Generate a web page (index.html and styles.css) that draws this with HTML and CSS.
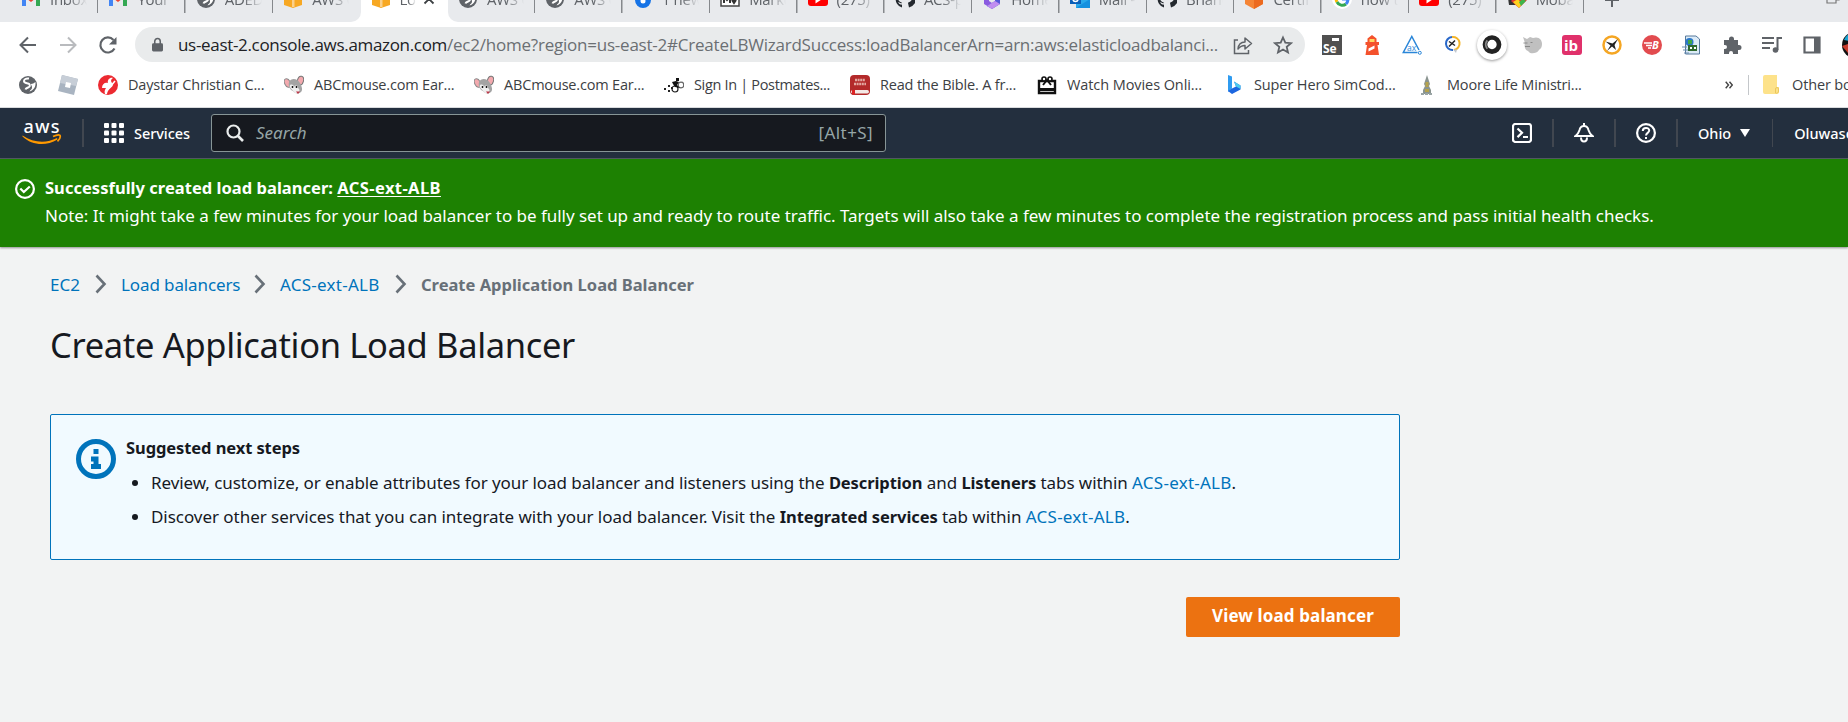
FILE: index.html
```html
<!DOCTYPE html>
<html lang="en">
<head>
<meta charset="utf-8">
<title>Create Application Load Balancer</title>
<link rel="stylesheet" href="styles.css">
</head>
<body>
<svg width="0" height="0" class="defs">
  <defs>
    <symbol id="gmail" viewBox="0 0 20 20"><path d="M1 3v14h4V8z" fill="#4285f4"/><path d="M19 3v14h-4V8z" fill="#34a853"/><path d="M1 3h3l6 5 6-5h3v3l-9 7-9-7z" fill="#ea4335"/></symbol>
    <symbol id="globe" viewBox="0 0 20 20"><circle cx="10" cy="10" r="9" fill="#5f6368"/><path d="M11 3.500c-3-.5-5 1-5 2.500 0 2 2 2 4 2.500s2.500 2.500 1 3.500-3 1-3.500 2.500" fill="none" stroke="#fff" stroke-width="2"/><path d="M13 9c1.500 0 3-1 4.500-2 .5 5-2 8.500-6 9.500 1-2 2.500-2 2.500-4s-1-2-1-3.500z" fill="#fff"/></symbol>
    <symbol id="cube" viewBox="0 0 20 20"><path d="M1 3l9-3 9 3v13l-9 3-9-3z" fill="#f7a823"/><path d="M9 2h2.500v16H9z" fill="#fbd08a"/></symbol>
    <symbol id="drop" viewBox="0 0 20 20"><path d="M10 0C5 4 2 8 2 11a8 8 0 0 0 16 0C18 8 15 4 10 0z" fill="#1573e6"/><circle cx="10" cy="12" r="2.500" fill="#fff"/></symbol>
    <symbol id="md" viewBox="0 0 20 20"><path d="M1 4h18v13H1z" fill="#fff" stroke="#444" stroke-width="1.500"/><path d="M4 14V8l3 3 3-3v6M14 8v5m-2-2l2 3 2-3" fill="none" stroke="#333" stroke-width="2"/></symbol>
    <symbol id="yt" viewBox="0 0 20 20"><rect y="3" width="20" height="14" rx="3" fill="#f00"/><path d="M7.500 6.500v8l6-4z" fill="#fff"/></symbol>
    <symbol id="git" viewBox="0 0 20 20"><path d="M10 1a9 9 0 0 0-3 17.600v-3C4 16 4 14 3 13c2 0 2 2 4 1 0-1-4-1-4-5l1-3V4l3 1h6l3-1v2l1 3c0 4-4 4-4 5l1 4.600A9 9 0 0 0 10 1z" fill="#24292f"/></symbol>
    <symbol id="hex" viewBox="0 0 20 20"><path d="M1 4l9-4 9 4v11l-9 5-9-5z" fill="#f58536"/><path d="M10 9l9-5v11l-9 5z" fill="#ec6a1f"/></symbol>
    <symbol id="m365" viewBox="0 0 20 20"><path d="M10 0L2 5v10l5 3 3-4-3-2V8l3-2z" fill="#8a5be0"/><path d="M10 0l8 5v10l-8 5-5-3 8-5V6z" fill="#5659d8"/><path d="M5 17l8-5 5 3-8 5z" fill="#c08df0"/></symbol>
    <symbol id="outlook" viewBox="0 0 20 20"><path d="M6 1h14v18H6z" fill="#28a8ea"/><path d="M6 19l14-9v9z" fill="#1490df"/><path d="M0 5h11v10H0z" fill="#0a5fb8"/><circle cx="5.500" cy="10" r="2.500" fill="none" stroke="#fff" stroke-width="1.600"/></symbol>
    <symbol id="google" viewBox="0 0 20 20"><circle cx="10" cy="10" r="10" fill="#fff"/><path d="M15 6a6 6 0 0 0-10 1" fill="none" stroke="#ea4335" stroke-width="3"/><path d="M5 7a6 6 0 0 0 0 6" fill="none" stroke="#fbbc05" stroke-width="3"/><path d="M5 13a6 6 0 0 0 9 2" fill="none" stroke="#34a853" stroke-width="3"/><path d="M10 10h6c0 2-1 4-2 5" fill="none" stroke="#4285f4" stroke-width="3"/></symbol>
    <symbol id="moba" viewBox="0 0 20 20"><path d="M0 2h10v14H2z" fill="#333"/><path d="M4 12l9-9 7 8-8 8z" fill="#e33b2e"/><path d="M6 13l5-3 4 5-3 4z" fill="#ffd21f"/><path d="M12 13l4-3 3 2-5 5z" fill="#3db54a"/></symbol>
    <symbol id="mouse" viewBox="0 0 20 20"><ellipse cx="3.500" cy="8" rx="2.800" ry="4.500" fill="#f3a9ae" stroke="#8a8a8a" transform="rotate(-25 3.500 8)"/><ellipse cx="16.500" cy="5.500" rx="3" ry="4.300" fill="#f3a9ae" stroke="#777" transform="rotate(15 16.500 5.500)"/><path d="M5 7c2-4 8-4 11 1 2 4 3 7 1 9s-6 2-8-1c-3-1-5-5-4-9z" fill="#a3a3a3"/><path d="M6 10c2-1 4 0 4 2 1-2 4-2 4 1 2 1 2 4 0 5s-4 0-5-2-4-3-3-6z" fill="#eee"/><circle cx="8.500" cy="12" r=".9"/><circle cx="12.500" cy="12" r=".9"/><path d="M12 16.500h4l-2 2.500z" fill="#b34"/></symbol>
    <symbol id="chevron" viewBox="0 0 12 20"><path d="M1.500 1.500L9.500 10l-8 8.500" fill="none" stroke="#687078" stroke-width="2.600"/></symbol>
  </defs>
</svg>

<div class="tabstrip">
  <div class="tab"><svg><use href="#gmail"/></svg><span>Inbox (1)</span></div>
  <div class="tab"><svg><use href="#gmail"/></svg><span>Your Tr</span></div>
  <div class="tab"><svg><use href="#globe"/></svg><span>ADEDA</span></div>
  <div class="tab nosep"><svg><use href="#cube"/></svg><span>AWS C</span></div>
  <div class="tab active"><svg><use href="#cube"/></svg><span>Lo</span><svg class="close" viewBox="0 0 12 12"><path d="M1.500 1.500l9 9m0-9l-9 9" stroke="#3c4043" stroke-width="1.800"/></svg></div>
  <div class="tab after"><svg><use href="#globe"/></svg><span>AWS C</span></div>
  <div class="tab"><svg><use href="#globe"/></svg><span>AWS C</span></div>
  <div class="tab"><svg><use href="#drop"/></svg><span>1 new n</span></div>
  <div class="tab"><svg><use href="#md"/></svg><span>Markd</span></div>
  <div class="tab"><svg><use href="#yt"/></svg><span>(275) </span></div>
  <div class="tab"><svg><use href="#git"/></svg><span>ACS-pr</span></div>
  <div class="tab"><svg><use href="#m365"/></svg><span>Home</span></div>
  <div class="tab"><svg><use href="#outlook"/></svg><span>Mail - </span></div>
  <div class="tab"><svg><use href="#git"/></svg><span>Briand</span></div>
  <div class="tab"><svg><use href="#hex"/></svg><span>Certifi</span></div>
  <div class="tab"><svg><use href="#google"/></svg><span>how to</span></div>
  <div class="tab"><svg><use href="#yt"/></svg><span>(275) </span></div>
  <div class="tab"><svg><use href="#moba"/></svg><span>Mobax</span></div>
  <svg class="newtab" viewBox="0 0 16 16"><path d="M8 1v14M1 8h14" stroke="#5f6368" stroke-width="2"/></svg>
  <svg class="restore" viewBox="0 0 14 14"><path d="M1 4h9v9H1zM4 4V1h9v9h-3" fill="none" stroke="#777" stroke-width="1.200"/></svg>
</div>

<div class="toolbar">
  <div class="nav">
    <svg viewBox="0 0 20 20"><path d="M18 10H3m7-7.500L2.500 10l7.500 7.500" fill="none" stroke="#5f6368" stroke-width="2"/></svg>
    <svg viewBox="0 0 20 20"><path d="M2 10h15m-7-7.500l7.500 7.500-7.500 7.500" fill="none" stroke="#b9bbbe" stroke-width="2"/></svg>
    <svg viewBox="0 0 20 20"><path d="M16.500 13.500A7.500 7.500 0 1 1 15.500 5" fill="none" stroke="#5f6368" stroke-width="2.200"/><path d="M18.500 2v7.500H11z" fill="#5f6368"/></svg>
  </div>
  <div class="omnibox">
    <svg class="lock" viewBox="0 0 12 16"><rect y="6" width="12" height="9" rx="1.500" fill="#5f6368"/><path d="M3 7V4a3 3 0 0 1 6 0v3" fill="none" stroke="#5f6368" stroke-width="1.700"/></svg>
    <span class="host">us-east-2.console.aws.amazon.com</span><span class="path">/ec2/home?region=us-east-2#CreateLBWizardSuccess:loadBalancerArn=arn:aws:elasticloadbalanci...</span>
    <svg class="share" viewBox="0 0 20 20"><path d="M5 5H1.500v13.500h14V15" fill="none" stroke="#5f6368" stroke-width="1.500"/><path d="M5 14c.5-5 3-7 7-7V3l6.500 5.500L12 14v-3.500c-3 0-5 1-7 3.500z" fill="none" stroke="#5f6368" stroke-width="1.500" stroke-linejoin="round"/></svg>
    <svg class="star" viewBox="0 0 20 20"><path d="M10 2.500l2.300 5.200 5.700.5-4.300 3.700 1.300 5.600-5-3-5 3 1.300-5.600L2 8.200l5.700-.5z" fill="none" stroke="#5f6368" stroke-width="1.800"/></svg>
  </div>
  <div class="extensions">
    <svg viewBox="0 0 20 20"><path d="M0 0h20v20H0z" fill="#505050"/><path d="M10 3h7v3h-7z" fill="#fff"/><text x="1" y="17.500" class="ic-se">Se</text></svg>
    <svg viewBox="0 0 20 20"><path d="M10 0l4.500 3.500V7H17v3h-1.500L17 20H3.500l1.500-10H3.500V7h2V3.500z" fill="#f4512c"/><path d="M7.500 4h5v3h-5z" fill="#ffd75e"/><path d="M6.500 13.500l6-3v3l-6 3z" fill="#fff"/></svg>
    <svg viewBox="0 0 20 20"><path d="M15.500 17.500H1.300L9.800 1.500 17 15" fill="none" stroke="#2a86d8" stroke-width="1.500"/><circle cx="17.800" cy="17.800" r="1.500" fill="#fff" stroke="#2a86d8"/><text x="5" y="15.500" class="ic-ax">ax</text></svg>
    <svg viewBox="0 0 20 20"><path d="M10 2a6.500 6.500 0 1 0 1 13" fill="none" stroke="#2867c9" stroke-width="2"/><path d="M10 2a6.500 6.500 0 0 1 2 13" fill="none" stroke="#f4b52a" stroke-width="2"/><path d="M7 6.500l6 4M7 11.500l6-6" stroke="#222" stroke-width="1.500"/><path d="M11 14.500h4l-1 3.500z" fill="#bfc6cf"/></svg>
    <svg class="ring" viewBox="0 0 30 32"><circle cx="15" cy="15.500" r="7.500" fill="none" stroke="#222" stroke-width="5"/><path d="M10 11a7 7 0 0 0 0 9" fill="none" stroke="#888" stroke-width="2"/></svg>
    <svg viewBox="0 0 20 20"><path d="M1 2l4 2 3-2 3 1c6-2 9 2 9 6s-2 5-3 6c-2 4-9 4-10 2l-1-1c-3-1-4-5-3-8z" fill="#c0c0c0"/><path d="M1.500 8h4M3 11.500h5M8.500 7.500h2" stroke="#888"/></svg>
    <svg viewBox="0 0 20 20"><rect width="20" height="20" rx="3" fill="#e0316b"/><text x="2" y="16" class="ic-ib">ib</text></svg>
    <svg viewBox="0 0 20 20"><circle cx="10" cy="10" r="8.500" fill="#fff" stroke="#f5a623" stroke-width="2.500"/><path d="M3.500 6.500l7 2L16 4l-3.500 6 1.500 5-4-3.500L5 16l3.500-5.500z" fill="#222"/></svg>
    <svg viewBox="0 0 20 20"><circle cx="10" cy="10" r="10" fill="#e24b4f"/><path d="M2 8h8M4 10.500h6M6 13h3" stroke="#fff" stroke-width="1.500"/><text x="10" y="14" class="ic-b">B</text></svg>
    <svg viewBox="0 0 20 20"><path d="M3.500 1H14l3.500 3v15h-14z" fill="#dcebf7" stroke="#56799b"/><circle cx="7.500" cy="7" r="4" fill="#2b77c9"/><path d="M6 5h4v4H6z" fill="#3fa648"/><path d="M6 10h9v6H6z" fill="#2f6a2f"/><path d="M8 12h2v2H8zm4 0h2v2h-2z" fill="#fff"/><path d="M0 12h5M1 15h5M2 18h5" stroke="#6a8db0"/></svg>
    <svg viewBox="0 0 20 20"><path d="M2 5h5V4a2.500 2.500 0 0 1 5 0v1h4v5h1a2.500 2.500 0 0 1 0 5h-1v4h-5v-1a2 2 0 0 0-4 0v1H2v-5h1a2 2 0 0 0 0-4H2z" fill="#5f6368"/></svg>
    <svg viewBox="0 0 20 20"><path d="M0 3h12M0 8h12M0 13h8M15.500 15V3H20" fill="none" stroke="#5f6368" stroke-width="2"/><circle cx="13.500" cy="15" r="2.800" fill="#5f6368"/></svg>
    <svg viewBox="0 0 20 20"><path d="M2.500 2.500h15v15h-15z" fill="#fff" stroke="#5f6368" stroke-width="2.200"/><path d="M12 2h6v16h-6z" fill="#5f6368"/></svg>
    <svg class="avatar" viewBox="0 0 26 26"><circle cx="13" cy="13" r="13" fill="#111"/><path d="M2 8A13 13 0 0 1 13 0v10z" fill="#19a6d6"/><path d="M0 14l6-2 4 3-4 6z" fill="#c93b2c"/></svg>
  </div>
</div>

<div class="bookmarks">
  <div class="bm"><svg><use href="#globe"/></svg></div>
  <div class="bm"><svg viewBox="0 0 20 20"><path d="M4 0l16 4-4 16L0 16z" fill="#a9b4c1"/><path d="M4 0l16 4-2 7L2 8z" fill="#c7ced7"/><path d="M8 7l5 1-1 5-5-1z" fill="#fff"/></svg></div>
  <div class="bm"><svg viewBox="0 0 20 20"><circle cx="10" cy="10" r="10" fill="#ec2a31"/><path d="M4 13c0-4 3-6 6-5-1-3 2-6 5-5-3 2-2 4 0 6 0 4-5 4-6 10H7c-1-3 0-4 1-6-2 0-2 0-4 0z" fill="#fff"/><path d="M12 12l5-6" stroke="#fff" stroke-width="1.500"/></svg><span class="w136">Daystar Christian C...</span></div>
  <div class="bm"><svg><use href="#mouse"/></svg><span class="w140">ABCmouse.com Ear...</span></div>
  <div class="bm"><svg><use href="#mouse"/></svg><span class="w140">ABCmouse.com Ear...</span></div>
  <div class="bm"><svg viewBox="0 0 20 20"><circle cx="11" cy="14" r="3" fill="none" stroke="#222" stroke-width="1.200"/><circle cx="17" cy="10" r="2.800" fill="none" stroke="#666" stroke-width="1.200"/><path d="M8 7l4-1 3 1-2 3 3 3-5-1-2-3zM12 3h3v3h-3z" fill="#111"/><path d="M0 14h2M4 16h2M4 11h2M7 13h2" stroke="#222" stroke-width="2"/></svg><span class="w136 tight">Sign In | Postmates...</span></div>
  <div class="bm"><svg viewBox="0 0 20 20"><rect width="20" height="20" rx="4" fill="#b32a2a"/><rect x="1" y="15" width="18" height="3.500" rx="1.700" fill="#f4e9e6"/><path d="M5 5h10M4 9h12" stroke="#e3a7a0" stroke-width="2.500" stroke-dasharray="2 .6"/><path d="M5 15v5l-1.500-1L2 20v-5z" fill="#d22"/></svg><span class="w137">Read the Bible. A fr...</span></div>
  <div class="bm"><svg viewBox="0 0 20 20"><path d="M2 6h16v12H2z" fill="none" stroke="#111" stroke-width="2.400"/><path d="M2 13h16v3H2z" fill="#111"/><path d="M6 10l4-5 4 5" fill="none" stroke="#111" stroke-width="2"/><circle cx="7" cy="4" r="2" fill="#fff" stroke="#111" stroke-width="1.600"/><circle cx="13" cy="4" r="2" fill="#fff" stroke="#111" stroke-width="1.600"/></svg><span class="w137 loose">Watch Movies Onli...</span></div>
  <div class="bm"><svg viewBox="0 0 20 20"><path d="M4 0l4 1.500v12L4 17z" fill="#2f9bf0"/><path d="M4 16l4-2.500 4-2-2-5 6.500 4v4L8 19z" fill="#1c66e0"/><path d="M10 6.500l6.500 4v3.500l-4.500-2.500z" fill="#4cc9ee"/></svg><span class="w143">Super Hero SimCod...</span></div>
  <div class="bm"><svg viewBox="0 0 20 20"><path d="M10 0l2 6 1 3-1 2 2 4v4H6v-4l2-4-1-2 1-3z" fill="#8a9490"/><path d="M8.500 7h3v5h-3zM8 14h4v3H8z" fill="#b5a24c"/><path d="M4 19h12" stroke="#9aa5a5" stroke-width="2" stroke-dasharray="3 1"/></svg><span class="w137">Moore Life Ministri...</span></div>
  <div class="overflow">
    <svg viewBox="0 0 8 8"><path d="M.7.700L3.500 4 .7 7.300M4.500.700L7.300 4 4.500 7.300" fill="none" stroke="#444" stroke-width="1.400"/></svg>
    <i></i>
    <svg class="folder" viewBox="0 0 16 19"><path d="M0 2a2 2 0 0 1 2-2h12v12h2v5a2 2 0 0 1-2 2H2a2 2 0 0 1-2-2z" fill="#fde28a"/><path d="M12.500 18v-4a1.500 1.500 0 0 1 3 0v2a2 2 0 0 1-3 2z" fill="#fde28a" stroke="#eac75c"/></svg>
    <span>Other bookmarks</span>
  </div>
</div>

<header class="awsnav">
  <svg class="logo" viewBox="0 0 40 27"><text x="1.500" y="13.500" textLength="36" class="ic-aws">aws</text><path d="M.5 16.500c11 7.500 24 8 34.500 2.500l.5 1.500C24 27.500 10 26.500.5 17.500z" fill="#f90"/><path d="M31 17.500c3-1.500 6-2 7-1.200.6 1.500-.5 4.200-2.500 6" fill="none" stroke="#f90" stroke-width="1.700"/></svg>
  <i class="vsep s1"></i>
  <svg class="grid" viewBox="0 0 20 20"><g fill="#fff"><rect width="5" height="5" rx="1"/><rect x="7.500" width="5" height="5" rx="1"/><rect x="15" width="5" height="5" rx="1"/><rect y="7.500" width="5" height="5" rx="1"/><rect x="7.500" y="7.500" width="5" height="5" rx="1"/><rect x="15" y="7.500" width="5" height="5" rx="1"/><rect y="15" width="5" height="5" rx="1"/><rect x="7.500" y="15" width="5" height="5" rx="1"/><rect x="15" y="15" width="5" height="5" rx="1"/></g></svg>
  <span class="services">Services</span>
  <div class="search">
    <svg viewBox="0 0 18 18"><circle cx="7.500" cy="7.500" r="6" fill="none" stroke="#eaeded" stroke-width="2.200"/><path d="M12 12l5 5" stroke="#eaeded" stroke-width="2.600"/></svg>
    <em>Search</em><span>[Alt+S]</span>
  </div>
  <div class="navright">
    <svg viewBox="0 0 20 20"><rect x="1" y="1" width="18" height="18" rx="2.500" fill="none" stroke="#fff" stroke-width="2.200"/><path d="M5.500 5.500L10 9.800l-4.500 4.300M11 14h5" fill="none" stroke="#fff" stroke-width="2.200"/></svg>
    <i class="vsep"></i>
    <svg viewBox="0 0 20 20"><path d="M10 0v3M1.500 13h17c-3-2-3.300-4-4-6-.7-3-2.500-4-4.500-4S6.200 4 5.500 7c-.7 2-1 4-4 6zM7 14.500c0 2.500 1 4 3 4s3-1.500 3-4" fill="none" stroke="#fff" stroke-width="2"/></svg>
    <i class="vsep"></i>
    <svg viewBox="0 0 20 20"><circle cx="10" cy="10" r="8.900" fill="none" stroke="#fff" stroke-width="2.200"/><path d="M6.800 8c0-4 6.400-4 6.400-.5 0 2.300-3.200 2.500-3.200 5" fill="none" stroke="#fff" stroke-width="2"/><path d="M9 14h2v2H9z" fill="#fff"/></svg>
    <i class="vsep"></i>
    <span>Ohio</span>
    <svg class="caret" viewBox="0 0 10 8"><path d="M0 0h10L5 8z" fill="#fff"/></svg>
    <i class="vsep thin"></i>
    <span class="user">Oluwaseun</span>
  </div>
</header>

<div class="flash">
  <svg viewBox="0 0 20 20"><circle cx="10" cy="10" r="8.900" fill="none" stroke="#fff" stroke-width="2.200"/><path d="M5.300 9.500l3.500 3.500 6-5.500" fill="none" stroke="#fff" stroke-width="2.200"/></svg>
  <div>
    <p class="flash-title">Successfully created load balancer: <u>ACS-ext-ALB</u></p>
    <p class="flash-note">Note: It might take a few minutes for your load balancer to be fully set up and ready to route traffic. Targets will also take a few minutes to complete the registration process and pass initial health checks.</p>
  </div>
</div>

<main>
  <nav class="crumbs">
    <a class="c1">EC2</a><svg><use href="#chevron"/></svg><a class="c2">Load balancers</a><svg><use href="#chevron"/></svg><a class="c3">ACS-ext-ALB</a><svg><use href="#chevron"/></svg><b>Create Application Load Balancer</b>
  </nav>
  <h1>Create Application Load Balancer</h1>
  <section class="info">
    <svg viewBox="0 0 40 40"><circle cx="20" cy="20" r="17.500" fill="none" stroke="#0073bb" stroke-width="5"/><path d="M17.500 10h5v5h-5zM15 17.500h7.500V25H25v5H15v-5h2.500v-2.500H15z" fill="#0073bb"/></svg>
    <div>
      <h2>Suggested next steps</h2>
      <ul>
        <li>Review, customize, or enable attributes for your load balancer and listeners using the <b>Description</b> and <b>Listeners</b> tabs within <a>ACS-ext-ALB</a>.</li>
        <li class="second">Discover other services that you can integrate with your load balancer. Visit the <b>Integrated services</b> tab within <a>ACS-ext-ALB</a>.</li>
      </ul>
    </div>
  </section>
  <div class="actions"><button>View load balancer</button></div>
</main>
</body>
</html>
```
FILE: styles.css
```css
* { box-sizing: border-box; }
html, body { margin: 0; height: 722px; overflow: hidden; }
body { background: #f2f3f3; font-family: "Noto Sans", "Open Sans", sans-serif; font-size: 17px; color: #16191f; }
svg { display: block; flex: none; width: 20px; height: 20px; }
span, em, b, a, i { white-space: nowrap; }
p, h1, h2, ul { margin: 0; padding: 0; font-weight: 400; white-space: nowrap; }
.defs { position: absolute; width: 0; height: 0; }

/* browser tab strip */
.tabstrip { display: flex; align-items: flex-end; height: 22px; padding-left: 11px; overflow: hidden; background: #e8eaed; font: 15px "Open Sans", sans-serif; color: #5f6368; }
.tab { display: flex; flex: none; align-items: center; width: 87.400px; height: 46px; padding-left: 10px; background: linear-gradient(#85888c, #85888c) right 14px / 1.500px 23px no-repeat; }
.tab span { width: 37px; margin-left: 9px; overflow: hidden; letter-spacing: -.3px; -webkit-mask-image: linear-gradient(90deg, #000 50%, transparent); mask-image: linear-gradient(90deg, #000 50%, transparent); }
.tab.nosep { background: #e8eaed; border-radius: 0 0 10px 0; box-shadow: 12px 0 0 #fff; }
.tab.active { background: #fff; }
.tab.active span { width: 16px; }
.tab.after { border-radius: 0 0 0 10px; background-color: #e8eaed; box-shadow: -12px 0 0 #fff; }
.tab .close { width: 12px; height: 12px; margin-left: 7px; }
.newtab { width: 16px; height: 16px; margin: 0 0 14px 20px; }
.restore { width: 14px; height: 14px; margin: 0 8px 18px auto; }

/* address bar */
.toolbar { display: flex; align-items: center; height: 45px; background: #fff; }
.nav { display: flex; gap: 20px; width: 135px; padding-left: 18px; }
.omnibox { display: flex; align-items: center; width: 1170px; height: 35px; padding-left: 17px; border-radius: 18px; background: #e9ebec; font: 17px "Open Sans", sans-serif; color: #6b6f73; }
.lock { width: 11px; height: 16px; margin-right: 15px; }
.host { flex: none; width: 269px; letter-spacing: -.32px; color: #202124; }
.path { flex: none; width: 771px; letter-spacing: -.223px; }
.share { margin-left: 15px; }
.star { margin-left: 20px; }
.extensions { display: flex; flex: 1; align-items: center; gap: 20px; height: 45px; padding-left: 17px; overflow: hidden; }
.extensions .ring { width: 30px; height: 30px; margin: 0 -5px; border-radius: 50%; box-shadow: 0 1px 3px #999; }
.extensions .avatar { width: 26px; height: 26px; }
.ic-se { font: 700 12px "Open Sans", sans-serif; fill: #fff; }
.ic-ax { font: 8.500px "Open Sans", sans-serif; fill: #2a86d8; }
.ic-ib { font: 700 15px "Open Sans", sans-serif; fill: #fff; }
.ic-b { font: italic 700 11px "Open Sans", sans-serif; fill: #fff; }
.ic-aws { font: 500 18px "Noto Sans", sans-serif; fill: #fff; }

/* bookmarks bar */
.bookmarks { display: flex; align-items: center; gap: 20px; height: 41px; padding: 0 0 5px 18px; background: #fff; border-bottom: 1px solid #d9dbdd; font: 14.500px "Open Sans", sans-serif; color: #3c4043; overflow: hidden; }
.bm { display: flex; flex: none; align-items: center; gap: 10px; letter-spacing: -.18px; }
.w136 { width: 136px; }
.w137 { width: 137px; }
.w140 { width: 140px; }
.w143 { width: 143px; letter-spacing: -.12px; }
.tight { letter-spacing: -.33px; }
.loose { letter-spacing: -.08px; }
.overflow { display: flex; align-items: center; width: 123px; margin-left: auto; letter-spacing: -.15px; }
.overflow svg { width: 8px; height: 8px; }
.overflow i { flex: none; width: 1px; height: 20px; margin: 0 14px 0 15px; background: #c4c7ca; }
.overflow .folder { width: 16px; height: 19px; margin-right: 13px; }

/* console navigation */
.awsnav { display: flex; align-items: center; height: 51px; padding: 0 0 1px 22px; background: #232f3e; border-bottom: 1px solid #545b64; color: #fff; font-size: 14.500px; font-weight: 500; overflow: hidden; }
.logo { width: 40px; height: 27px; }
.vsep { width: 2px; height: 28px; background: #414750; }
.s1 { margin: 0 20px; }
.services { width: 56px; margin: 1px 21px 0 10px; letter-spacing: -.06px; }
.search { display: flex; align-items: center; width: 675px; height: 38px; padding: 0 12px 0 14px; border: 1px solid #879596; border-radius: 3px; background: #16191f; color: #95a5a6; font-size: 17px; font-weight: 400; }
.search svg { width: 18px; height: 18px; margin-right: 12px; }
.search span { margin-left: auto; letter-spacing: .4px; }
.navright { display: flex; align-items: center; width: 336px; margin-left: auto; }
.navright .vsep { flex: none; margin: 0 20px; }
.navright span { margin-top: 1px; }
.navright .caret { width: 10px; height: 8px; margin-left: 9px; }
.navright .vsep.thin { width: 1px; margin: 0 21px 0 22px; }

/* success message */
.flash { display: flex; gap: 10px; height: 88px; padding: 15px 0 0 15px; background: #1d8102; color: #fff; box-shadow: 0 1px 2px #0006; line-height: 28px; }
.flash svg { margin-top: 5px; }
.flash-title { font-size: 16.500px; font-weight: 700; letter-spacing: .03px; }
.flash-title u { letter-spacing: .4px; text-underline-offset: 2px; }
.flash-note { letter-spacing: -.028px; }

/* page content */
main { width: 1400px; padding-left: 50px; }
.crumbs { display: flex; align-items: center; height: 28px; margin-top: 23px; color: #687078; }
.crumbs svg { width: 12px; height: 20px; margin: 0 14px; }
.crumbs b { font-size: 16.500px; }
a { color: #0073bb; letter-spacing: .25px; }
.c1 { width: 31px; letter-spacing: 0; }
.c2 { width: 119px; letter-spacing: -.11px; }
.c3 { width: 101px; }
h1 { margin-top: 22px; font-size: 34.500px; line-height: 50px; letter-spacing: -.34px; }
.info { display: flex; gap: 10px; height: 146px; margin-top: 44px; padding: 15px 0 0 25px; border: 1px solid #0073bb; border-radius: 2px; background: #f1faff; }
.info > svg { width: 40px; height: 40px; margin-top: 9px; }
h2 { font-size: 16.500px; font-weight: 700; line-height: 36px; letter-spacing: -.09px; }
ul { padding-left: 25px; }
li { line-height: 34px; letter-spacing: -.07px; }
li.second { letter-spacing: -.04px; }
li b { font-size: 16.500px; letter-spacing: -.1px; }
.actions { display: flex; justify-content: flex-end; margin-top: 37px; }
button { width: 214px; height: 40px; padding: 0 0 3px; border: 0; border-radius: 2px; background: #ec7211; color: #fff; font: 700 17px "Noto Sans", sans-serif; letter-spacing: .12px; }
```
